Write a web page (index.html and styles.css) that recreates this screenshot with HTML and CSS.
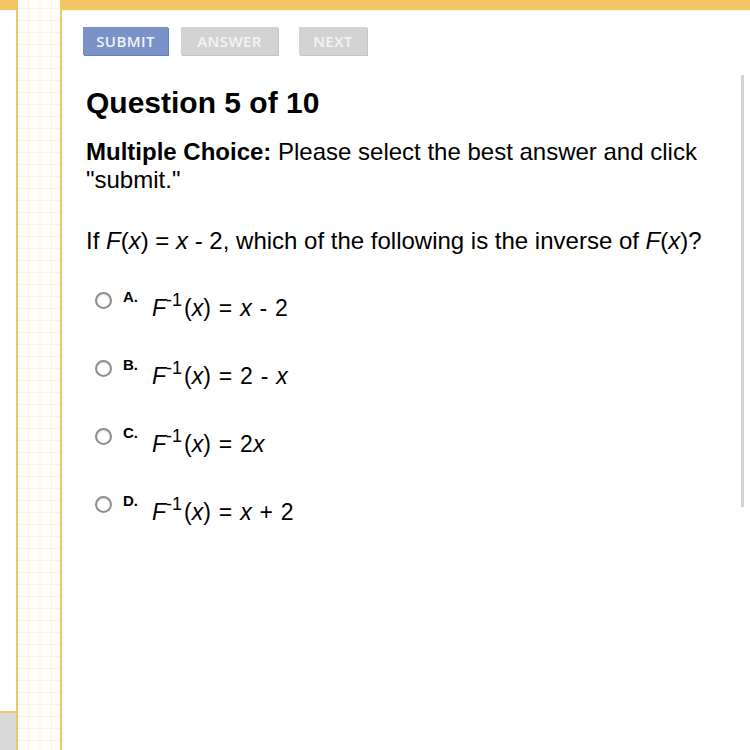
FILE: index.html
```html
<!DOCTYPE html>
<html>
<head>
<meta charset="utf-8">
<link rel="stylesheet" href="styles.css">
</head>
<body>
<div class="page">
  <div class="gutter">
    <div class="gutter-top"></div>
    <div class="gutter-fill"></div>
    <div class="gutter-bottom"></div>
  </div>
  <div class="strip"></div>
  <div class="main">
    <div class="topbar"></div>
    <div class="content">
      <div class="buttons">
        <div class="btn btn-submit">SUBMIT</div>
        <div class="btn btn-answer">ANSWER</div>
        <div class="btn btn-next">NEXT</div>
      </div>
      <h1 class="title">Question 5 of 10</h1>
      <p class="instructions"><b>Multiple Choice:</b> Please select the best answer and click "submit."</p>
      <p class="question">If <i>F</i>(<i>x</i>) = <i>x</i> - 2, which of the following is the inverse of <i>F</i>(<i>x</i>)?</p>
      <div class="options">
        <div class="option">
          <span class="radio"></span>
          <span class="label">A.</span>
          <span class="formula"><i>F</i><span class="sup">-1</span>(<i>x</i>) = <i>x</i> - 2</span>
        </div>
        <div class="option">
          <span class="radio"></span>
          <span class="label">B.</span>
          <span class="formula"><i>F</i><span class="sup">-1</span>(<i>x</i>) = 2 - <i>x</i></span>
        </div>
        <div class="option">
          <span class="radio"></span>
          <span class="label">C.</span>
          <span class="formula"><i>F</i><span class="sup">-1</span>(<i>x</i>) = 2<i>x</i></span>
        </div>
        <div class="option">
          <span class="radio"></span>
          <span class="label">D.</span>
          <span class="formula"><i>F</i><span class="sup">-1</span>(<i>x</i>) = <i>x</i> + 2</span>
        </div>
      </div>
    </div>
    <div class="scrollbar"></div>
  </div>
</div>
</body>
</html>
```

FILE: styles.css
```css
html, body {
  margin: 0;
  padding: 0;
  background: #fff;
}
.page {
  display: flex;
  width: 750px;
  height: 750px;
  overflow: hidden;
  font-family: "Liberation Sans", Arial, sans-serif;
  color: #000;
}
.gutter {
  width: 16px;
  display: flex;
  flex-direction: column;
  flex-shrink: 0;
}
.gutter-top {
  height: 10px;
  background: #f1c663;
}
.gutter-fill {
  flex: 1;
  background: #fff;
}
.gutter-bottom {
  height: 37px;
  border-top: 2px solid #ecc96f;
  background: #d9d9d9;
}
.strip {
  width: 42px;
  flex-shrink: 0;
  border-left: 2px solid #ecc86b;
  border-right: 2px solid #ecc86b;
  background-color: #fffefb;
  background-image:
    linear-gradient(to right, #faf3e2 1px, transparent 1px),
    linear-gradient(to bottom, #faf3e2 1px, transparent 1px);
  background-size: 11.5px 12px;
  background-position: 10px 8px;
}
.main {
  flex: 1;
  position: relative;
  display: flex;
  flex-direction: column;
}
.topbar {
  height: 10px;
  background: #f1c663;
  border-bottom: 1px solid #fbf3dc;
}
.content {
  padding-left: 24px;
}
.buttons {
  display: flex;
  margin-top: 16px;
  margin-left: -3px;
  height: 28px;
}
.btn {
  height: 28px;
  line-height: 28px;
  text-align: center;
  font-family: "Open Sans", "DejaVu Sans", sans-serif;
  font-weight: 600;
  font-size: 15px;
  letter-spacing: 0.4px;
  color: #f4f4f4;
  background: #d3d3d3;
  box-shadow: 1px 1px 0 #c4c4c4;
}
.btn-submit {
  width: 85px;
  background: #7a92c8;
  color: #eef2fa;
  box-shadow: 1px 1px 0 #6a80b2;
}
.btn-answer {
  width: 97px;
  margin-left: 13px;
}
.btn-next {
  width: 68px;
  margin-left: 21px;
}
.title {
  margin: 31px 0 0 0;
  font-size: 30px;
  line-height: 34px;
  font-weight: bold;
}
.instructions {
  margin: 18px 0 0 0;
  font-size: 24px;
  line-height: 28px;
  width: 640px;
}
.question {
  margin: 33px 0 0 0;
  font-size: 24px;
  line-height: 28px;
  white-space: nowrap;
}
.options {
  margin-top: 34px;
  display: flex;
  flex-direction: column;
  gap: 33px;
}
.option {
  display: flex;
  align-items: flex-start;
  height: 35px;
}
.radio {
  width: 13px;
  height: 13px;
  margin: 3px 0 0 9px;
  border: 2px solid #8e8e8e;
  border-radius: 50%;
  background: #fff;
  box-shadow: inset 0 1px 2px rgba(0,0,0,0.12);
  flex-shrink: 0;
}
.label {
  margin: 1px 0 0 11px;
  width: 16px;
  font-size: 15px;
  line-height: 14px;
  font-weight: bold;
}
.formula {
  margin: 4px 0 0 13px;
  font-size: 23px;
  line-height: 30px;
  word-spacing: 1.5px;
  white-space: nowrap;
}
.sup {
  font-size: 18px;
  line-height: 0;
  vertical-align: 10px;
  margin-left: 0;
  margin-right: 2px;
}
.scrollbar {
  position: absolute;
  left: 679px;
  top: 75px;
  width: 3px;
  height: 432px;
  background: #d4d4d4;
}
```
